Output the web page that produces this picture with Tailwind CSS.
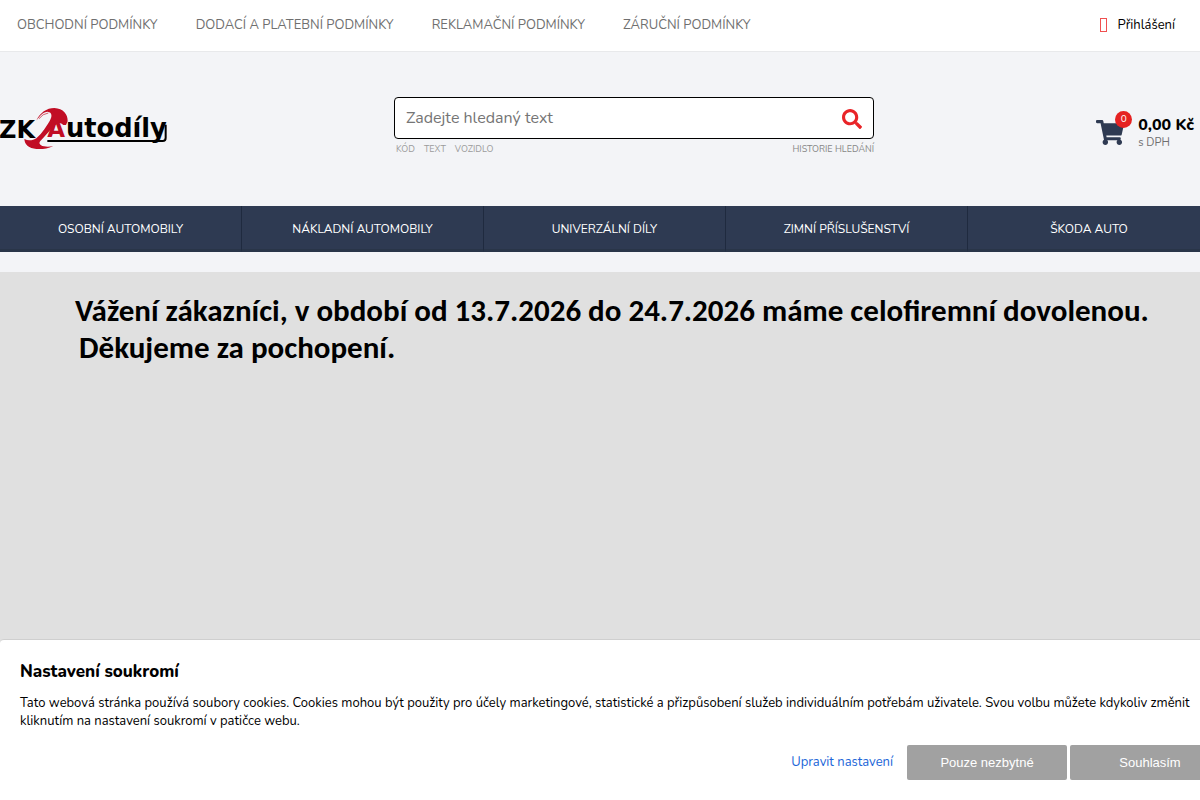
<!DOCTYPE html>
<html lang="cs">
<head>
    <meta charset="UTF-8">
    <meta name="viewport" content="width=device-width, initial-scale=1.0">
    <title>ZK Autodíly</title>
    <script src="https://cdn.jsdelivr.net/npm/@tailwindcss/browser@4"></script>
</head>
<body class="bg-[#f3f4f7] font-['Nunito','Lato',sans-serif] text-black h-screen overflow-hidden flex flex-col">

    <!-- Top bar -->
    <div class="bg-white border-b border-[#e8e9eb] h-[52px] flex shrink-0 items-center justify-between">
        <nav class="flex gap-[38px] pl-[17px] pb-[2px] text-[13px] leading-5 text-[#6f6f6f] uppercase">
            <a href="#">Obchodní podmínky</a>
            <a href="#">Dodací a platební podmínky</a>
            <a href="#">Reklamační podmínky</a>
            <a href="#">Záruční podmínky</a>
        </nav>
        <a href="#" class="flex items-center gap-[11px] pr-[25px] pb-[2px] text-[13px] leading-5">
            <span class="w-[7px] h-[14px] border border-[#f05050]"></span>
            Přihlášení
        </a>
    </div>

    <!-- Header -->
    <header class="flex shrink-0 h-[154px]">
        <a href="#" class="pt-[54px] w-[394px]" aria-label="ZK Autodíly">
            <svg class="w-[168px] h-[45px]" viewBox="0 48 504 135">
                <path fill="#c10d25" d="M109 92C120 68 140 54 163 54C190 55 204 73 203 94L198 105L190 105C182 96 172 97 164 106L124 150C114 158 118 166 132 169C142 171 151 170 160 168C142 177 125 178 109 177C87 175 74 165 73 147C86 154 99 151 110 144C127 130 140 108 149 93C157 79 157 67 143 65C130 65 119 78 109 92Z"/>
                <path fill="none" stroke="#c10d25" stroke-width="2" d="M117 86Q128 71 145 69"/>
                <g font-family="DejaVu Sans" font-weight="bold">
                    <text x="-3" y="144" font-size="72">ZK</text>
                    <text x="142" y="142" font-size="69" fill="#c10d25">A</text>
                    <text x="198" y="142" font-size="77">utodíly</text>
                </g>
                <path fill="none" stroke="#000" stroke-width="6" d="M142 153H488Q497 153 497 143V104"/>
            </svg>
        </a>
        <div class="w-[480px] pt-[45px]">
            <form class="flex items-center h-[42px] border border-black rounded bg-white">
                <input type="text" aria-label="Hledat" placeholder="Zadejte hledaný text" class="flex-1 px-[11px] text-base outline-none placeholder:text-[#757575]">
                <button type="submit" aria-label="Hledat" class="pt-[2px] pr-[11px]">
                    <svg class="size-5" viewBox="0 0 512 512" fill="#e92428"><path d="M505 442.700 405.300 343c-4.500-4.500-10.600-7-17-7H372c27.600-35.300 44-79.700 44-128C416 93.100 322.900 0 208 0S0 93.100 0 208s93.100 208 208 208c48.300 0 92.700-16.400 128-44v16.300c0 6.400 2.500 12.500 7 17l99.700 99.700c9.400 9.400 24.600 9.400 33.900 0l28.300-28.300c9.400-9.400 9.400-24.600.1-34zM208 336c-70.700 0-128-57.200-128-128 0-70.700 57.200-128 128-128 70.700 0 128 57.200 128 128 0 70.700-57.200 128-128 128z"/></svg>
                </button>
            </form>
            <div class="flex gap-[9px] pl-[2px] pt-1 text-[9px] leading-3 text-[#9b9b9b]">
                <a href="#">KÓD</a>
                <a href="#">TEXT</a>
                <a href="#">VOZIDLO</a>
                <a href="#" class="ml-auto text-[#868686]">HISTORIE HLEDÁNÍ</a>
            </div>
        </div>
        <div class="flex-1 flex justify-end pt-[60px] pr-[6px]">
            <a href="#" class="flex items-start h-10">
                <span class="relative mt-2 mr-[14px]">
                    <svg class="w-7 h-[25px]" viewBox="0 0 576 512" fill="#2e3a52"><path d="M528.100 301.300l47.300-208C578.800 78.300 567.400 64 552 64H159.200l-9.200-44.800C147.800 8 137.900 0 126.500 0H24C10.700 0 0 10.700 0 24v16c0 13.300 10.700 24 24 24h69.900l70.200 343.400C147.300 417.100 136 435.200 136 456c0 30.900 25.100 56 56 56s56-25.100 56-56c0-15.700-6.400-29.800-16.800-40h209.600C430.400 426.200 424 440.300 424 456c0 30.900 25.100 56 56 56s56-25.100 56-56c0-22.200-12.900-41.300-31.600-50.400l5.500-24.300c3.400-15-8-29.300-23.400-29.300H218.100l-6.500-32h293.100c11.200 0 20.900-7.800 23.400-18.700z"/></svg>
                    <span class="absolute -top-[9px] left-[19px] size-[17px] rounded-full bg-[#e52222] text-white text-[10px] leading-[17px] text-center">0</span>
                </span>
                <span>
                    <b class="block text-base leading-[26px] font-extrabold">0,00 Kč</b>
                    <span class="block text-[11px] leading-[10px] text-[#6f6f6f]">s DPH</span>
                </span>
            </a>
        </div>
    </header>

    <!-- Categories -->
    <nav class="grid shrink-0 grid-cols-5 min-w-[1210px] bg-[#2e3a52] text-white text-xs text-center leading-[39px] uppercase divide-x divide-[#1f2a3f]">
        <a href="#" class="pt-1 border-b-3 border-b-[#293548]">Osobní automobily</a>
        <a href="#" class="pt-1 border-b-3 border-b-[#293548]">Nákladní automobily</a>
        <a href="#" class="pt-1 border-b-3 border-b-[#293548]">Univerzální díly</a>
        <a href="#" class="pt-1 border-b-3 border-b-[#293548]">Zimní příslušenství</a>
        <a href="#" class="pt-1 border-b-3 border-b-[#293548]">Škoda auto</a>
    </nav>

    <!-- Banner -->
    <main class="mt-5 flex-1 bg-[#e0e0e0] pt-5 pl-[75px] font-['Calibri','Open_Sans',sans-serif] font-bold text-[31px] leading-[37px] whitespace-nowrap">
        <p>Vážení zákazníci, v období od 13.7.2026 do 24.7.2026 máme celofiremní dovolenou.</p>
        <p class="pl-1">Děkujeme za pochopení.</p>
    </main>

    <!-- Cookies -->
    <section class="fixed bottom-0 left-0 w-full min-w-[1250px] bg-white border-t border-[#cfcfcf] rounded-t p-5">
        <h2 class="text-[17px] font-extrabold leading-6">Nastavení soukromí</h2>
        <p class="mt-[10px] text-[13px] leading-[18px]">Tato webová stránka používá soubory cookies. Cookies mohou být použity pro účely marketingové, statistické a přizpůsobení služeb individuálním potřebám uživatele. Svou volbu můžete kdykoliv změnit kliknutím na nastavení soukromí v patičce webu.</p>
        <div class="mt-[15px] flex justify-end items-center gap-[3px] text-[13px]">
            <a href="#" class="mr-[11px] text-[#2166d8]">Upravit nastavení</a>
            <button class="w-40 h-[35px] rounded-xs bg-[#a1a1a1] text-white font-['Liberation_Sans',sans-serif]">Pouze nezbytné</button>
            <button class="w-40 h-[35px] rounded-xs bg-[#a1a1a1] text-white font-['Liberation_Sans',sans-serif]">Souhlasím</button>
        </div>
    </section>

</body>
</html>
